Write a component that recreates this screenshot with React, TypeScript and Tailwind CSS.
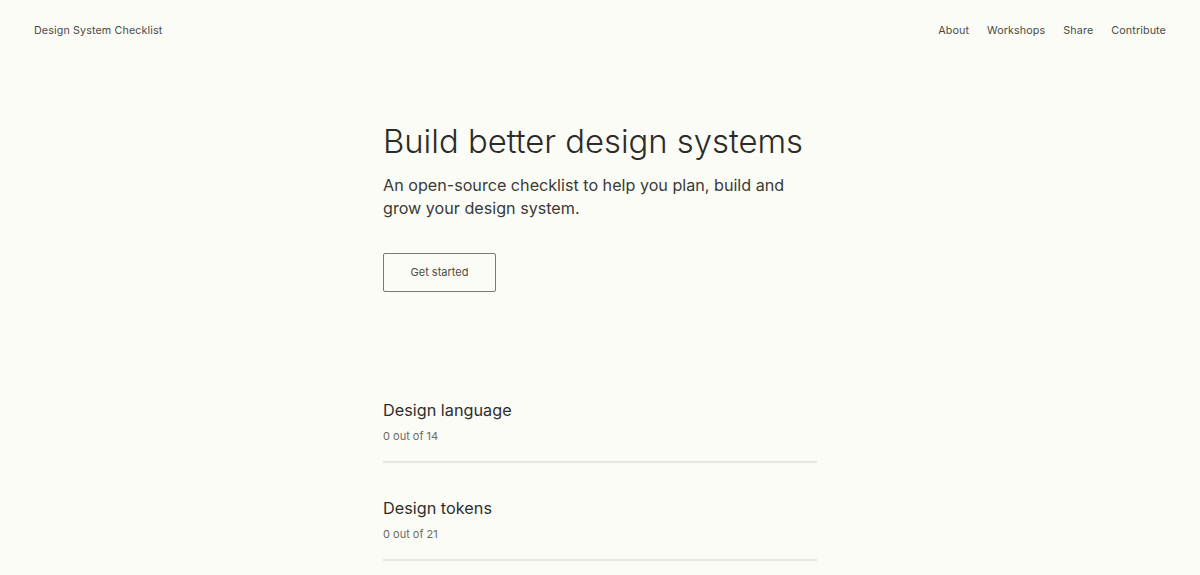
import React from 'react';

const categories = [
  { title: 'Design language', total: 14 },
  { title: 'Design tokens', total: 21 },
];

const navLinks = ['About', 'Workshops', 'Share', 'Contribute'];

const App: React.FC = () => {
  return (
    <div className="min-h-screen bg-[#fcfcf6] text-[#2e2e2c] font-['Inter',sans-serif]">
      {/* Top bar */}
      <header className="flex h-[61px] items-center justify-between px-[34px]">
        <a href="#" className="text-[10.75px] leading-[14px] text-[#4a4a47] tracking-[0.01em]">
          Design System Checklist
        </a>
        <nav className="flex gap-[18px]">
          {navLinks.map((link) => (
            <a key={link} href="#" className="text-[10.75px] leading-[14px] text-[#4a4a47] tracking-[0.01em]">
              {link}
            </a>
          ))}
        </nav>
      </header>

      <main className="mx-auto w-[434px]">
        {/* Hero */}
        <section className="pt-[60px]">
          <h1 className="text-[32.8px] font-light leading-[40px] text-[#2b2b29]">
            Build better design systems
          </h1>
          <p className="mt-[13px] text-[16.15px] leading-[23px] text-[#3a3a37]">
            An open-source checklist to help you plan, build and grow your design system.
          </p>
          <button className="mt-[33px] h-[39px] w-[113px] border border-[#7a7a74] rounded-[2px] text-[11px] text-[#4a4a47]">
            Get started
          </button>
        </section>

        {/* Checklist categories */}
        <section className="mt-[107px]">
          {categories.map((cat) => (
            <div key={cat.title} className="border-b-2 border-[#e8e8e1] pb-[18px] mb-[34px]">
              <h2 className="text-[16.25px] leading-[22px] text-[#2e2e2c]">{cat.title}</h2>
              <p className="mt-[8px] text-[11px] leading-[14px] text-[#6a6a66]">
                0 out of {cat.total}
              </p>
            </div>
          ))}
        </section>
      </main>
    </div>
  );
};

export default App;
